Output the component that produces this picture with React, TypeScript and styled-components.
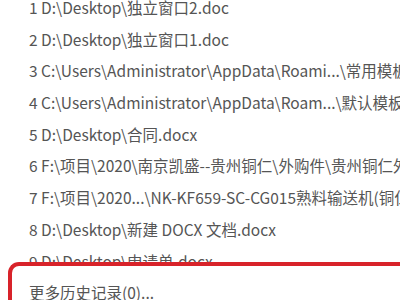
import styled, { createGlobalStyle } from "styled-components"

const GlobalStyle = createGlobalStyle`
  html, body {
    margin: 0;
    padding: 0;
    background: #fff;
    overflow: hidden;
  }
`

const Panel = styled.div`
  width: 400px;
  height: 300px;
  overflow: hidden;
  background: #fff;
  font-family: "Noto Sans CJK SC", "Noto Sans", sans-serif;
  font-size: 15.5px;
  color: #555;
`

const List = styled.ul`
  list-style: none;
  margin: -8px 0 0;
  padding: 0;
`

const Item = styled.li`
  height: 31.7px;
  line-height: 31.7px;
  padding-left: 29px;
  white-space: nowrap;
`

// the red marker drawn round the last entry lies over the row above it
const MoreItem = styled.li`
  position: relative;
  margin: -15px -30px 0 8px;
  padding: 10px 0 20px 17px;
  line-height: 32px;
  white-space: nowrap;
  background: #fff;
  border-top: 4px solid #d8232a;
  border-left: 4px solid #d8232a;
  border-top-left-radius: 11px;
`

const files = [
  "D:\\Desktop\\独立窗口2.doc",
  "D:\\Desktop\\独立窗口1.doc",
  "C:\\Users\\Administrator\\AppData\\Roami...\\常用模板\\",
  "C:\\Users\\Administrator\\AppData\\Roam...\\默认模板\\",
  "D:\\Desktop\\合同.docx",
  "F:\\项目\\2020\\南京凯盛--贵州铜仁\\外购件\\贵州铜仁外购件",
  "F:\\项目\\2020...\\NK-KF659-SC-CG015熟料输送机(铜仁)",
  "D:\\Desktop\\新建 DOCX 文档.docx",
  "D:\\Desktop\\申请单.docx",
]

export default function App() {
  return (
    <Panel>
      <GlobalStyle />
      <List>
        {files.map((path, i) => (
          <Item key={path}>
            {i + 1} {path}
          </Item>
        ))}
        <MoreItem>更多历史记录(0)...</MoreItem>
      </List>
    </Panel>
  )
}
